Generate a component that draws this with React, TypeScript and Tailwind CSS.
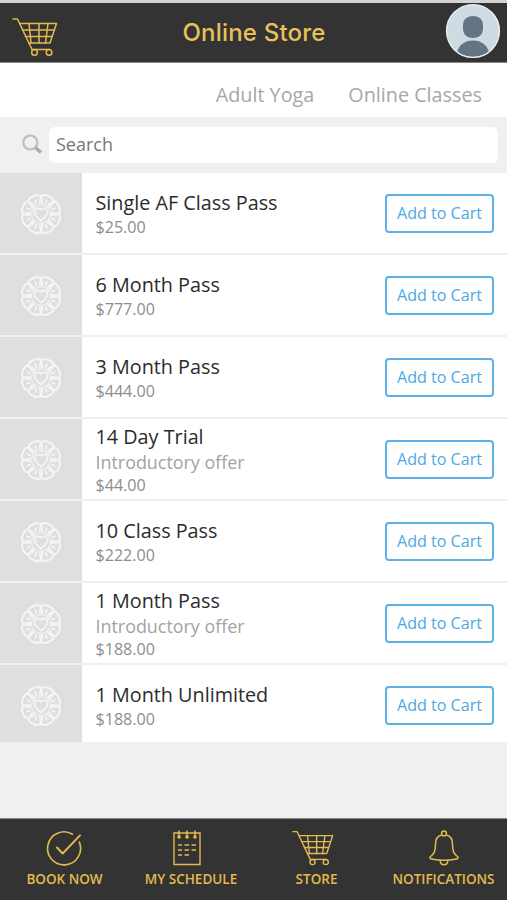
import React from "react";

type Product = { name: string; price: string; note?: string };

const products: Product[] = [
  { name: "Single AF Class Pass", price: "$25.00" },
  { name: "6 Month Pass", price: "$777.00" },
  { name: "3 Month Pass", price: "$444.00" },
  { name: "14 Day Trial", price: "$44.00", note: "Introductory offer" },
  { name: "10 Class Pass", price: "$222.00" },
  { name: "1 Month Pass", price: "$188.00", note: "Introductory offer" },
  { name: "1 Month Unlimited", price: "$188.00" },
];

function CartIcon({ className }: { className: string }) {
  return (
    <svg viewBox="0 0 46 38" className={className} fill="none" stroke="currentColor" strokeWidth="1.5" strokeLinecap="round" strokeLinejoin="round">
      <path d="M1 1h4.500L20 31.500" />
      <path d="M8 5.500h36.500L38 25H17" />
      <path d="M10.500 12h31.500M13.500 18.500h26.300" />
      <path d="M17 5.500 19 25M27 5.500V25M36 5.500 33.500 25" />
      <path d="M20.500 31.500h17" />
      <circle cx="22.500" cy="34.400" r="2.800" />
      <circle cx="37" cy="34.400" r="2.800" />
    </svg>
  );
}

const petals = Array.from({ length: 8 }, (_, i) => i * 45 + 22.5);

function FlowerIcon() {
  return (
    <svg viewBox="-21 -21 42 42" className="h-[42px] w-[42px]" fill="none" stroke="#f5f5f5" strokeLinecap="round" strokeLinejoin="round">
      {petals.map((angle) => (
        <g key={angle} transform={`rotate(${angle})`}>
          <path d="M-6.700-15.800C-6.500-20.700 6.500-20.700 6.700-15.800" strokeWidth="2" />
          <path d="M-2.800-10-6.200-16M2.800-10 6.200-16" strokeWidth="1.800" />
          <path d="M0-11.500V-15" strokeWidth="1.600" />
        </g>
      ))}
      <circle r="9.300" strokeWidth="1" />
      <path d="M0 6.500C-3 4.300-6.800 1-6.500-2.500-6-6.500-1.600-6.500 0-3.800 1.600-6.500 6-6.500 6.500-2.500 6.800 1 3 4.300 0 6.500Z" strokeWidth="1.600" />
    </svg>
  );
}

function CheckIcon() {
  return (
    <svg viewBox="0 0 36 36" className="mr-px h-9 w-9" fill="none" stroke="currentColor" strokeWidth="1.6" strokeLinecap="round" strokeLinejoin="round">
      <path d="M26.500 4.200A16.500 16.500 0 1 0 33.300 12" />
      <path d="m11 17.500 5.600 6L34 5.400" strokeWidth="1.9" />
    </svg>
  );
}

function ScheduleIcon() {
  return (
    <svg viewBox="0 0 28 36" className="mr-2 h-9 w-7" fill="none" stroke="currentColor" strokeWidth="1.4">
      <path d="M1 3h26v31.500H1Z" />
      <path d="M6 1v6M14 1v6M22 1v6" strokeWidth="1.5" strokeLinecap="round" />
      <g fill="currentColor" stroke="none">
        <circle cx="6" cy="7" r="1.8" />
        <circle cx="14" cy="7" r="1.8" />
        <circle cx="22" cy="7" r="1.8" />
      </g>
      <path d="M5 15h4m2.500 0h4.500m2.500 0H23M5 20h4m2.500 0h4.500m2.500 0H23M5 25h4m2.500 0h4.500" strokeWidth="1.7" />
    </svg>
  );
}

function BellIcon() {
  return (
    <svg viewBox="0 0 30 36" className="h-9 w-[30px]" fill="none" stroke="currentColor" strokeWidth="1.5" strokeLinejoin="round">
      <circle cx="15" cy="3.500" r="2.400" />
      <path d="M12.600 5C8 6.200 6.500 10 6.500 14c0 7.500-1.500 10-5 12.500-1 1.200-.3 2.100 1 2.400 8 1.800 17 1.800 25 0 1.300-.3 2-1.200 1-2.400-3.500-2.500-5-5-5-12.500 0-4-1.500-7.800-6.100-9" />
      <path d="M11.200 30.200c0 6 7.600 6 7.600 0" />
    </svg>
  );
}

function SearchIcon() {
  return (
    <svg viewBox="0 0 22 22" className="h-[22px] w-[22px]" fill="none">
      <circle cx="9.300" cy="8.500" r="7" stroke="#b5c1c4" strokeWidth="2.200" />
      <path d="m14.300 13.500 5.700 5" stroke="#a5b0b3" strokeWidth="3.500" />
    </svg>
  );
}

function Avatar() {
  return (
    <svg viewBox="0 0 56 56" className="mr-[-1px] -mt-1 h-14 w-14">
      <clipPath id="avatar-clip">
        <circle cx="28" cy="28" r="26" />
      </clipPath>
      <circle cx="28" cy="28" r="26.500" fill="#cfdae2" />
      <g clipPath="url(#avatar-clip)" fill="#637585">
        <path d="M28 13c6 0 10 3.500 10 9.500v3c0 5.500-3.500 9.500-10 9.500s-10-4-10-9.500v-3C18 16.500 22 13 28 13Z" />
        <path d="M11 56c0-12 7-18.500 17-18.500S45 44 45 56Z" />
      </g>
      <circle cx="28" cy="28" r="26.400" fill="none" stroke="#eeeeea" strokeWidth="1.400" />
    </svg>
  );
}

function ProductRow({ product }: { product: Product }) {
  return (
    <li className="flex h-[82px] border-b-2 border-[#f0f0f0] bg-white last:h-[77px] last:border-b-0">
      <div className="flex w-[82px] shrink-0 justify-center bg-[#dfdfdf] pt-5">
        <FlowerIcon />
      </div>
      <div className={product.note ? "grow pl-[13.500px] pt-[5px]" : "grow pl-[13.500px] pt-[17px]"}>
        <h2 className="text-[19.800px] leading-[26px] text-[#2b2b2b]">{product.name}</h2>
        {product.note && <p className="text-[17.900px] leading-6 text-[#a0a4a4]">{product.note}</p>}
        <p className="text-[16.100px] leading-[23px] text-[#8d8d8d]">{product.price}</p>
      </div>
      <button className="mr-[13px] mt-[20.500px] h-[39px] w-[109px] shrink-0 rounded-[4px] border-2 border-[#5eb1e7] text-[16.100px] text-[#4da9e3]">
        Add to Cart
      </button>
    </li>
  );
}

export default function App() {
  return (
    <div className="flex h-[900px] w-[507px] flex-col overflow-hidden bg-[#f0f0f0] font-['Open_Sans','Noto_Sans',sans-serif]">
      <header className="flex h-[63px] shrink-0 items-center justify-between border-b border-t-3 border-b-[#858585] border-t-[#d4d4d4] bg-[#333333] pl-3 pr-[7px] text-[#e3ba4e]">
        <CartIcon className="mt-2 h-[38px] w-[46px]" />
        <h1 className="ml-[5px] whitespace-nowrap font-['Inter',sans-serif] text-[24px] font-medium tracking-[0.2px] text-[#e9c05a]">Online Store</h1>
        <Avatar />
      </header>
      <nav className="flex h-[54px] shrink-0 justify-end gap-[34px] bg-white pr-[25px] pt-[18px] text-[19.800px] leading-7 text-[#a5a8a8]">
        <span>Adult Yoga</span>
        <span>Online Classes</span>
      </nav>
      <div className="flex h-[56px] shrink-0 items-center pb-px pl-[21px] pr-[9px]">
        <SearchIcon />
        <div className="ml-[6px] flex h-9 grow items-center rounded-[6px] bg-white pl-[7px] text-[18px] text-[#777777]">Search</div>
      </div>
      <ul className="shrink-0">
        {products.map((product) => (
          <ProductRow key={product.name} product={product} />
        ))}
      </ul>
      <footer className="mt-auto grid h-[82px] shrink-0 grid-cols-[129px_124px_127px_127px] border-t border-[#888888] bg-[#333333] pt-[11px] text-[13.500px] font-semibold leading-[18px] text-[#e3ba4e]">
        <div className="flex flex-col items-center gap-[4px]"><CheckIcon />BOOK NOW</div>
        <div className="flex flex-col items-center gap-[4px]"><ScheduleIcon />MY SCHEDULE</div>
        <div className="flex flex-col items-center gap-[4px]"><CartIcon className="mr-[7px] h-9 w-[42px]" />STORE</div>
        <div className="flex flex-col items-center gap-[4px]"><BellIcon />NOTIFICATIONS</div>
      </footer>
    </div>
  );
}
